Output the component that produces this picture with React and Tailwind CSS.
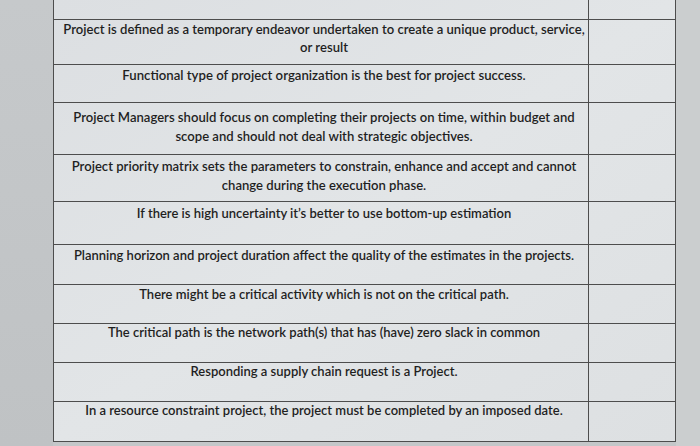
const rows = [
  { h: "h-[45px]", pad: "pt-0 leading-[18px] text-[13.1px]", lines: ["Project is defined as a temporary endeavor undertaken to create a unique product, service,", "or result"] },
  { h: "h-[38px]", pad: "pt-px leading-[18px] text-[13.2px]", lines: ["Functional type of project organization is the best for project success."] },
  { h: "h-[52px]", pad: "pt-[5px] leading-[19px] text-[13.1px]", lines: ["Project Managers should focus on completing their projects on time, within budget and", "scope and should not deal with strategic objectives."] },
  { h: "h-[47px]", pad: "pt-[2px] leading-[19px] text-[13.1px]", lines: ["Project priority matrix sets the parameters to constrain, enhance and accept and cannot", "change during the execution phase."] },
  { h: "h-[43px]", pad: "pt-[2px] leading-[18px] text-[13px]", lines: ["If there is high uncertainty it\u2019s better to use bottom-up estimation"] },
  { h: "h-[40px]", pad: "pt-px leading-[18px] text-[13px]", lines: ["Planning horizon and project duration affect the quality of the estimates in the projects."] },
  { h: "h-[39px]", pad: "pt-0 leading-[18px] text-[13px]", lines: ["There might be a critical activity which is not on the critical path."] },
  { h: "h-[39px]", pad: "pt-0 leading-[16px] text-[13px]", lines: ["The critical path is the network path(s) that has (have) zero slack in common"] },
  { h: "h-[39px]", pad: "pt-0 leading-[16px] text-[13px]", lines: ["Responding a supply chain request is a Project."] },
  { h: "h-[40px]", pad: "pt-0 leading-[16px] text-[13px]", lines: ["In a resource constraint project, the project must be completed by an imposed date."] },
];

export default function App() {
  return (
    <div className="w-[700px] h-[446px] flex bg-[#c4c7c9] overflow-hidden font-['Lato','Liberation_Sans',sans-serif] text-[#1f1f1f]">
      <div className="w-[53px] shrink-0 bg-gradient-to-b from-[#c6c9cb] to-[#bfc2c4]" />
      <div className="w-[623px] shrink-0 h-[442px] flex flex-col border-x border-[#4d4d4d] bg-gradient-to-br from-[#dcdfe2] via-[#e2e5e7] to-[#dde0e2]">
        <div className="grid grid-cols-[535px_1fr] h-[20px] shrink-0 border-b border-[#4d4d4d]">
          <div className="border-r border-[#4d4d4d]" />
          <div />
        </div>
        {rows.map((row, i) => (
          <div
            key={i}
            className={`grid grid-cols-[535px_1fr] shrink-0 border-b border-[#4d4d4d] ${row.h}`}
          >
            <div className={`border-r border-[#4d4d4d] text-center font-semibold pl-[6px] ${row.pad}`}>
              {row.lines.map((l, j) => (
                <div key={j} className="whitespace-nowrap">{l}</div>
              ))}
            </div>
            <div />
          </div>
        ))}
      </div>
      <div className="flex-1 bg-[#cbcecf]" />
    </div>
  );
}
